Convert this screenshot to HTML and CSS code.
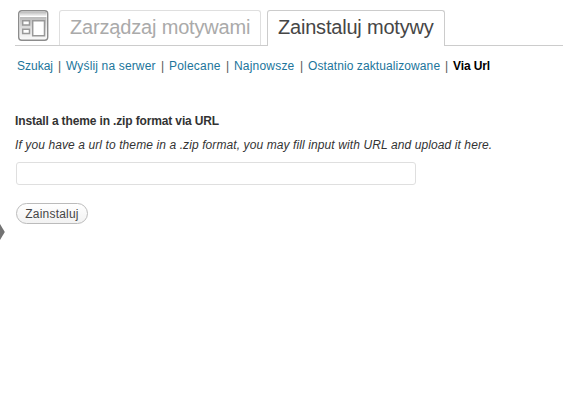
FILE: index.html
```html
<!DOCTYPE html>
<html lang="pl">
<head>
<meta charset="utf-8">
<title>Zainstaluj motywy</title>
<link rel="stylesheet" href="styles.css">
</head>
<body>
<header class="header">
  <svg class="icon" width="32" height="32" viewBox="0 0 32 32">
    <defs>
      <linearGradient id="shade" x1="0" y1="0" x2="0" y2="1"><stop offset="0" stop-color="#bbb"/><stop offset=".6" stop-color="#e6e6e6"/><stop offset="1" stop-color="#f8f8f8"/></linearGradient>
      <linearGradient id="bar" x1="0" y1="0" x2="0" y2="1"><stop offset="0" stop-color="#bbb"/><stop offset="1" stop-color="#f4f4f4"/></linearGradient>
    </defs>
    <rect x="1.7" y=".7" width="29" height="29.6" rx="3" fill="#fff" stroke="#8c8c8c" stroke-width="1.4"/>
    <path d="M3 2h26.500v4H3z" fill="url(#bar)"/>
    <path d="M3 7h26.500v20q0 2-2 2H5q-2 0-2-2z" fill="url(#shade)"/>
    <g fill="#fff" stroke="#999" stroke-width="1.5"><path d="M5.700 10.700h6.800v4.200H5.700zM5.700 19.200h6.800v4.200H5.700zM15.700 10.700h11.800v15H15.700z"/></g>
  </svg>
  <nav class="tabs">
    <a class="tab tab-manage">Zarządzaj motywami</a>
    <a class="tab tab-install active">Zainstaluj motywy</a>
  </nav>
</header>
<ul class="subnav">
  <li><a>Szukaj</a></li>
  <li><a class="upload">Wyślij na serwer</a></li>
  <li><a>Polecane</a></li>
  <li><a class="newest">Najnowsze</a></li>
  <li><a class="updated">Ostatnio zaktualizowane</a></li>
  <li><a class="current">Via Url</a></li>
</ul>
<main class="content">
  <h4>Install a theme in .zip format via URL</h4>
  <p>If you have a url to theme in a .zip format, you may fill input with URL and upload it here.</p>
  <form>
    <input class="url" type="text">
    <button class="button" type="button">Zainstaluj</button>
  </form>
</main>
<svg class="arrow" width="5" height="16" viewBox="0 0 5 16"><path d="M0 0L4.8 8L0 16z" fill="#737373"/></svg>
</body>
</html>
```
FILE: styles.css
```css
* { box-sizing: border-box; }
body { margin: 0; background: #fff; color: #333; font: 12px/17px "Liberation Sans", Arial, sans-serif; overflow: hidden; height: 412px; }
.header { display: flex; margin-left: 15px; height: 46px; padding-top: 10px; border-bottom: 1px solid #ccc; }
.icon { margin-left: 2px; flex: none; }
.tabs { display: flex; gap: 6px; margin-left: 10px; }
.tab { height: 35px; padding: 0 0 0 10px; border: 1px solid #dfdfdf; border-bottom: 0; border-radius: 3px 3px 0 0; color: #aaa; font-size: 20px; line-height: 33px; white-space: nowrap; }
.tab-manage { width: 202px; letter-spacing: -.17px; }
.tab-install { width: 178px; letter-spacing: -.2px; }
.tab.active { height: 36px; color: #464646; border-color: #ccc; background: #fff; }
.subnav { list-style: none; display: grid; grid-template-columns: 49px 103px 65px 74px 145px auto; margin: 12px 0 0 17px; padding: 0; white-space: nowrap; }
.subnav li { display: flex; justify-content: space-between; }
.subnav li:not(:last-child)::after { content: "|"; margin-right: 5px; color: #555; }
.subnav a { color: #21759b; }
.subnav .upload { letter-spacing: .15px; }
.subnav li:nth-child(3) a { letter-spacing: .2px; }
.subnav .newest { letter-spacing: .2px; }
.subnav .updated { letter-spacing: .09px; }
.subnav .current { color: #000; font-weight: bold; letter-spacing: -.1px; }
.content { margin: 38px 0 0 15px; }
.content h4 { margin: 0; font-size: 12px; line-height: 17px; letter-spacing: -.14px; }
.content p { margin: 7px 0 8px; font-style: italic; white-space: nowrap; letter-spacing: .1px; }
.url { display: block; width: 400px; height: 23px; margin: 0 0 18px 1px; border: 1px solid #dfdfdf; border-radius: 3px; background: #fff; }
.button { display: block; width: 72px; height: 21px; margin-left: 1px; padding: 0; border: 1px solid #bbb; border-radius: 11px; background: linear-gradient(#fff, #f2f2f2); color: #464646; font: 12px/18px "Liberation Sans", Arial, sans-serif; letter-spacing: .2px; }
.arrow { position: absolute; left: 0; top: 224px; }
```
